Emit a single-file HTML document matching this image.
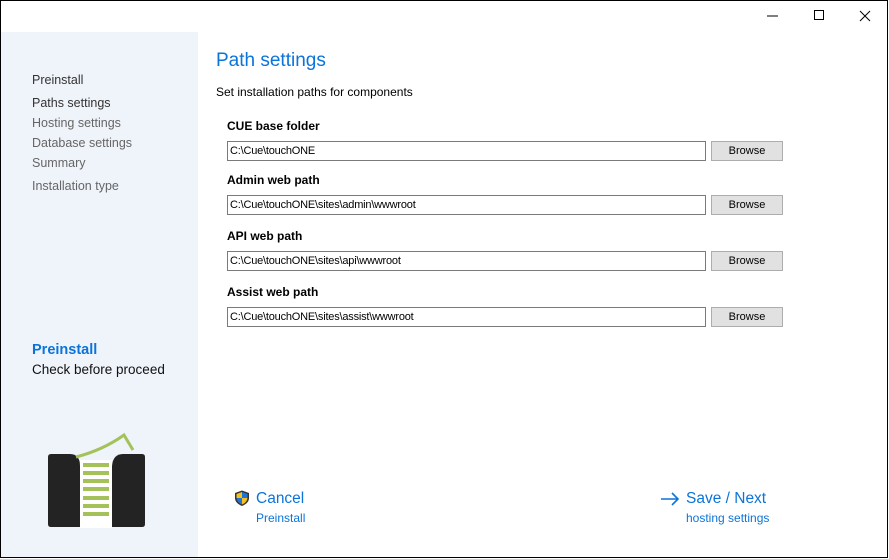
<!DOCTYPE html>
<html><head><style>
*{margin:0;padding:0;box-sizing:border-box}
body{width:889px;height:559px;background:#fff;position:relative;overflow:hidden;font-family:"Liberation Sans",sans-serif}
.frame{position:absolute;left:0;top:0;width:888px;height:558px;border:1px solid #000}
.side{position:absolute;left:1px;top:32px;width:197px;height:525px;background:#eff3fa}
.nav{position:absolute;left:32px;font-size:12.5px;color:#666}
.lbl{position:absolute;left:227px;font:bold 12px "Liberation Sans",sans-serif;color:#000}
.tb{position:absolute;left:227px;width:479px;height:20px;border:1px solid #7a7a7a;font:11px "Liberation Sans",sans-serif;padding:3px 0 0 2px;letter-spacing:-0.2px}
.bt{position:absolute;left:711px;width:72px;height:20px;border:1px solid #adadad;background:#e1e1e1;font:11px "Liberation Sans",sans-serif;text-align:center;padding-top:3px}
.blue{color:#0a74da}
</style></head><body>
<div class="frame"></div>
<div class="side"></div>
<svg style="position:absolute;left:766px;top:8px" width="110" height="16">
<line x1="1" y1="8" x2="12" y2="8" stroke="#000"/>
<rect x="48.5" y="2.5" width="9" height="9" fill="none" stroke="#000"/>
<path d="M94 3L104 13M104 3L94 13" stroke="#000"/>
</svg>
<div class="nav" style="top:73px;color:#333">Preinstall</div>
<div class="nav" style="top:96px;color:#333">Paths settings</div>
<div class="nav" style="top:116px">Hosting settings</div>
<div class="nav" style="top:136px">Database settings</div>
<div class="nav" style="top:156px">Summary</div>
<div class="nav" style="top:179px">Installation type</div>
<div style="position:absolute;left:32px;top:342px;font-size:14.5px;font-weight:bold;color:#0a74da">Preinstall</div>
<div style="position:absolute;left:32px;top:362px;font-size:13.5px;color:#111">Check before proceed</div>
<svg style="position:absolute;left:48px;top:432px" width="97" height="96">
<path d="M3 22H22Q32 22 32 34V95H3Q0 95 0 92V25Q0 22 3 22Z" fill="#232323"/>
<path d="M94 22H75Q65 22 64 34V95H94Q97 95 97 92V25Q97 22 94 22Z" fill="#232323"/>
<rect x="32" y="28" width="32" height="68" fill="#fff"/>
<path d="M28 25Q55 18 76 3L85 18" fill="none" stroke="#a4c15a" stroke-width="3"/>
<g fill="#a4c15a"><rect x="35" y="31" width="26" height="4"/><rect x="35" y="39" width="26" height="4"/><rect x="35" y="47" width="26" height="4"/><rect x="35" y="55" width="26" height="4"/><rect x="35" y="64" width="26" height="4"/><rect x="35" y="72" width="26" height="4"/><rect x="35" y="80" width="26" height="4"/></g>
</svg>
<div style="position:absolute;left:216px;top:50px;font-size:19px;color:#0a74da">Path settings</div>
<div style="position:absolute;left:216px;top:85px;font-size:12px;color:#000">Set installation paths for components</div>
<div class="lbl" style="top:119px">CUE base folder</div>
<div class="tb" style="top:141px">C:\Cue\touchONE</div><div class="bt" style="top:141px">Browse</div>
<div class="lbl" style="top:173px">Admin web path</div>
<div class="tb" style="top:195px">C:\Cue\touchONE\sites\admin\wwwroot</div><div class="bt" style="top:195px">Browse</div>
<div class="lbl" style="top:229px">API web path</div>
<div class="tb" style="top:251px">C:\Cue\touchONE\sites\api\wwwroot</div><div class="bt" style="top:251px">Browse</div>
<div class="lbl" style="top:285px">Assist web path</div>
<div class="tb" style="top:307px">C:\Cue\touchONE\sites\assist\wwwroot</div><div class="bt" style="top:307px">Browse</div>
<svg style="position:absolute;left:234px;top:490px" width="16" height="17">
<path d="M8 0.5L15 3V8Q15 13 8 16Q1 13 1 8V3Z" fill="#333"/>
<path d="M8 2L13.5 4V8H8Z" fill="#1e74d8"/><path d="M2.5 8H8V14.5Q3 12.5 2.5 8Z" fill="#1e74d8"/>
<path d="M8 2L2.5 4V8H8Z" fill="#f5c020"/><path d="M13.5 8H8V14.5Q13 12.5 13.5 8Z" fill="#f5c020"/>
</svg>
<div class="blue" style="position:absolute;left:256px;top:490px;font-size:15.5px">Cancel</div>
<div class="blue" style="position:absolute;left:256px;top:511px;font-size:12px">Preinstall</div>
<svg style="position:absolute;left:660px;top:492px" width="20" height="14"><path d="M1 7H18M12 1L18 7L12 13" fill="none" stroke="#0a74da" stroke-width="1.6"/></svg>
<div class="blue" style="position:absolute;left:686px;top:490px;font-size:15.5px">Save / Next</div>
<div class="blue" style="position:absolute;left:686px;top:511px;font-size:12px">hosting settings</div>
</body></html>
